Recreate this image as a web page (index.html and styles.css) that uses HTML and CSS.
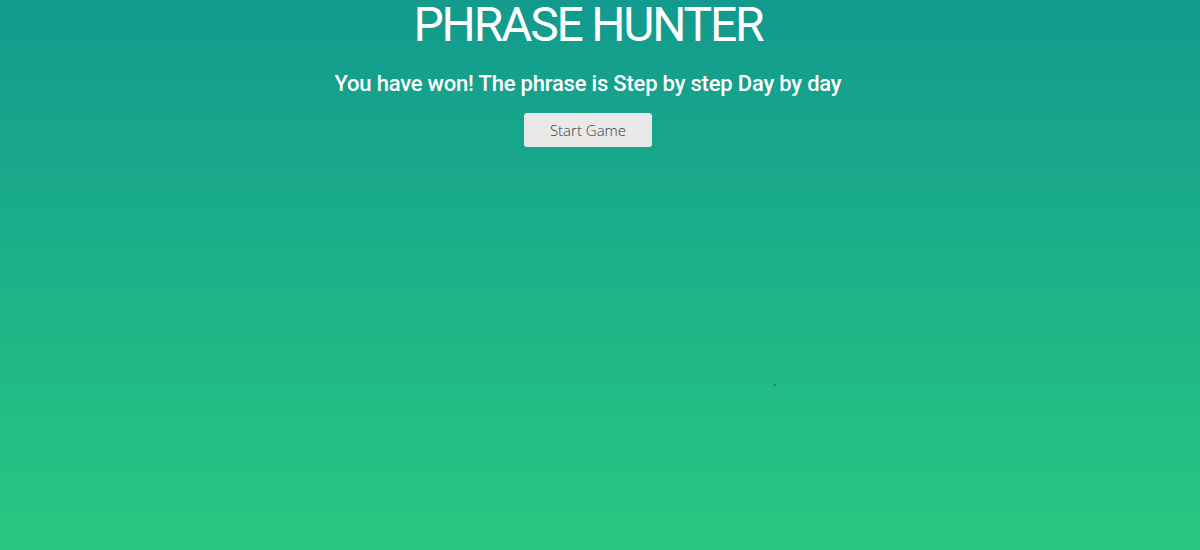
FILE: index.html
```html
<!DOCTYPE html>
<html lang="en">
<head>
<meta charset="utf-8">
<title>Phrase Hunter</title>
<link rel="stylesheet" href="styles.css">
</head>
<body>
<div class="main-container">
  <div class="overlay">
    <h2 class="title">PHRASE HUNTER</h2>
    <h1 class="game-over-message">You have won! The phrase is Step by step Day by day</h1>
    <button class="btn-reset" type="button">Start Game</button>
  </div>
  <span class="dot"></span>
</div>
</body>
</html>
```
FILE: styles.css
```css
html, body {
  margin: 0;
  padding: 0;
  height: 100%;
}
body {
  background: linear-gradient(to bottom, #129a8e, #28c882);
  font-family: "Roboto", "Inter", sans-serif;
  color: #fff;
}
.main-container {
  position: relative;
  height: 550px;
  padding-right: 24px;
}
.overlay {
  display: flex;
  flex-direction: column;
  align-items: center;
}
.title {
  margin: 0;
  padding-top: 0;
  font-size: 48px;
  font-weight: 400;
  line-height: 50px;
  letter-spacing: -2.2px;
}
.game-over-message {
  margin: 19px 0 0;
  font-size: 22px;
  font-weight: 500;
  line-height: 30px;
  letter-spacing: -0.2px;
}
.btn-reset {
  margin-top: 14px;
  width: 128px;
  height: 34px;
  border: none;
  border-radius: 3px;
  background: #e9e9e9;
  color: #3a3a3a;
  font-family: "Open Sans", sans-serif;
  font-weight: 300;
  font-size: 15px;
  padding: 0;
}
.dot {
  position: absolute;
  left: 774px;
  top: 384px;
  width: 2px;
  height: 2px;
  background: #2a6fb0;
}
```
